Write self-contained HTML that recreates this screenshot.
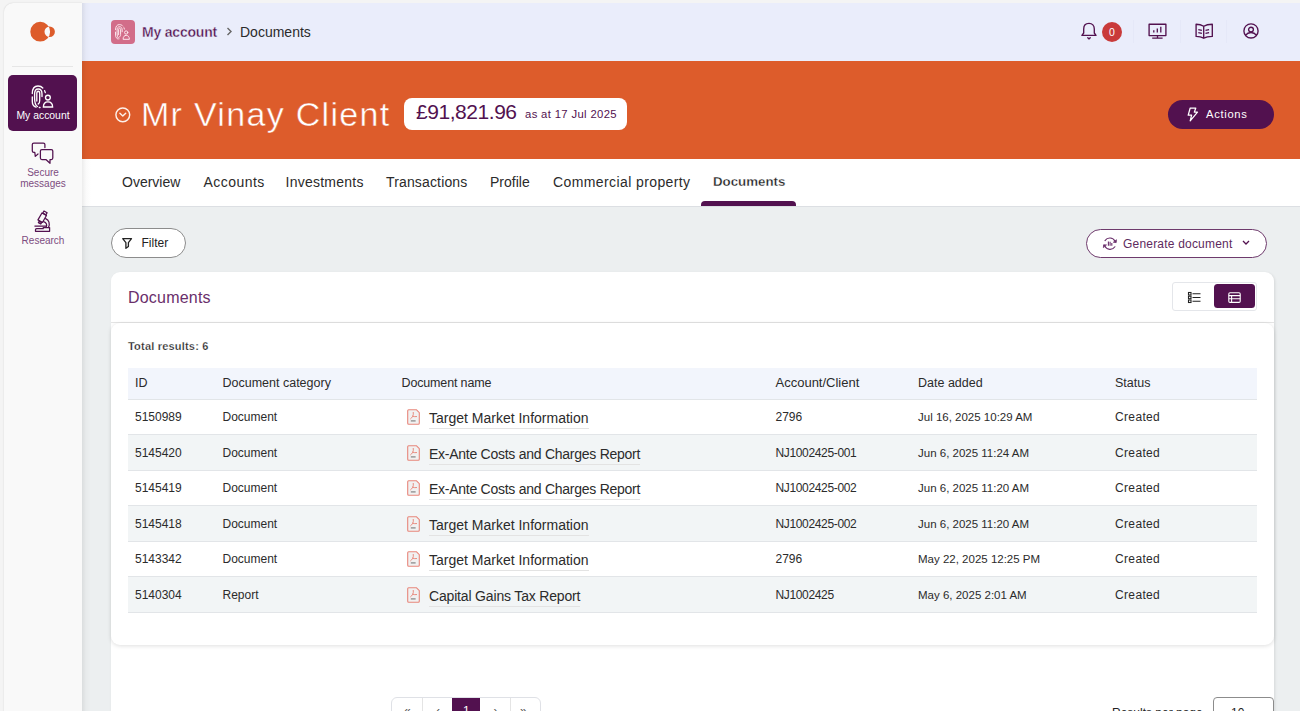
<!DOCTYPE html>
<html><head><meta charset="utf-8">
<style>
*{box-sizing:border-box;margin:0;padding:0}
html,body{width:1300px;height:711px;overflow:hidden;background:#f4f4f4;font-family:"Liberation Sans",sans-serif;color:#222;position:relative}
.a{position:absolute;white-space:nowrap}
svg{position:absolute;overflow:visible}
#sidebar{position:absolute;left:4px;top:3px;width:78px;height:730px;background:#f9f9f9;border-top-left-radius:9px;box-shadow:0 0 1.5px rgba(0,0,0,0.18)}
#main{position:absolute;left:82px;top:3px;width:1218px;height:730px;background:#eceff0}
#hdr{position:absolute;left:82px;top:3px;width:1218px;height:58px;background:#eaedfb}
#band{position:absolute;left:82px;top:61px;width:1218px;height:98px;background:#dd5c2b}
#tabs{position:absolute;left:82px;top:159px;width:1218px;height:48px;background:#fff;border-bottom:1px solid #dcdfe3}
#mainshadow{position:absolute;left:82px;top:3px;width:9px;height:730px;background:linear-gradient(to right,rgba(0,0,0,0.075),rgba(0,0,0,0.02) 45%,rgba(0,0,0,0))}
.tab{font-size:14px;color:#2b2b2b;top:174.4px;line-height:16px}
.slbl{position:absolute;font-size:10px;color:#7d4c80;text-align:center;width:78px;left:4px;line-height:11px}
.th{font-size:12.5px;color:#2b2b2b;top:376px;line-height:14px}
.td{font-size:12px;color:#2b2b2b;line-height:14px}
.lnk{font-size:14px;color:#2b2b2b;line-height:16px;border-bottom:1px solid #e3e3e3;padding-bottom:2px}
.row{position:absolute;left:128px;width:1129px;height:35.5px;border-bottom:1px solid #e2e5e8}
.pg{position:absolute;top:697px;width:30px;height:30px;border-right:1px solid #e0e0e0}
</style></head>
<body>
<div id="sidebar"></div>
<div id="main"></div>
<div id="hdr"></div>
<div id="band"></div>
<div id="tabs"></div>
<div id="mainshadow"></div>

<!-- sidebar -->
<svg style="left:0px;top:0px" width="60" height="50" viewBox="0 0 60 50">
  <path fill-rule="evenodd" fill="#dd5c2b" d="M50.1 31.7 A9.9 9.9 0 1 1 30.3 31.7 A9.9 9.9 0 1 1 50.1 31.7 Z M54.9 31.8 A5.2 5.2 0 1 1 44.5 31.8 A5.2 5.2 0 1 1 54.9 31.8 Z"/>
</svg>
<div class="a" style="left:12px;top:66px;width:61px;height:1px;background:#e6e6e6"></div>
<div class="a" style="left:8px;top:74.7px;width:69px;height:56.8px;background:#52114f;border-radius:5px"></div>
<svg style="left:25px;top:80px" width="35" height="32" viewBox="0 0 35 32" fill="none" stroke="#fff" stroke-width="1.35" stroke-linecap="round">
  <path d="M7.3 13.5 C7.3 8.5 9.5 6 13 6 C15.3 6 16.8 6.8 17.8 8"/>
  <path d="M7.3 17 V21.5 C7.3 24.5 8.8 26.5 11 27.2"/>
  <path d="M19.6 10.6 L20.3 12.6"/>
  <path d="M12.5 26.5 C10.3 25.5 9.6 23 9.6 18 V14 C9.6 10.8 11 9 13.2 9 C15.5 9 17 10.8 17 14 V16.5"/>
  <path d="M11.8 21 V13.5 C11.8 12 12.3 11.2 13.2 11.2 C14.2 11.2 14.7 12 14.7 13.5 V20.5 C14.7 22.5 14.2 23.6 13.2 24"/>
  <path d="M14.3 27.5 L15 27.5"/>
  <circle cx="22.9" cy="17.6" r="2.4"/>
  <path d="M18.4 27 C18.4 23.6 20.4 21.8 22.9 21.8 C25.4 21.8 27.6 23.6 27.6 27 Z"/>
</svg>
<div class="slbl" style="top:110px;color:#fff;font-size:10.4px">My account</div>

<svg style="left:28px;top:140px" width="30" height="28" viewBox="0 0 30 28" fill="none" stroke="#52114f" stroke-width="1.25" stroke-linejoin="round" stroke-linecap="round">
  <path d="M16.9 7.5 V4.6 Q16.9 3.1 15.4 3.1 H5.8 Q4.3 3.1 4.3 4.6 V11 Q4.3 12.4 5.8 12.4 H6.8 L7.3 16.4 L10 14"/>
  <path d="M13.9 9.6 H23.3 Q24.8 9.6 24.8 11.1 V18 Q24.8 19.5 23.3 19.5 H22 V23.3 L17.9 19.5 H13.9 Q12.4 19.5 12.4 18 V11.1 Q12.4 9.6 13.9 9.6 Z"/>
</svg>
<div class="slbl" style="top:167px">Secure</div>
<div class="slbl" style="top:178px">messages</div>

<svg style="left:28px;top:205px" width="28" height="31" viewBox="0 0 28 31" fill="none" stroke="#52114f" stroke-width="1.25" stroke-linejoin="round" stroke-linecap="round">
  <path d="M13.95 7.94 L18.45 10.54 L14.45 17.46 L9.95 14.86 Z"/>
  <path d="M15.99 6.0 L19.11 7.8 L17.91 9.88 L14.79 8.08 Z"/>
  <path d="M11.2 16.2 L13.6 17.6 L12.8 19 L10.4 17.6 Z"/>
  <path d="M17.6 13.6 C21 15 22.2 18.5 20.5 22.5"/>
  <path d="M15.6 16.6 C18.5 17.5 19.5 20 18 22"/>
  <path d="M6.9 21.1 H18.2"/>
  <path d="M7.5 26.3 H21.6 V22.6 H15.2 V23.7 H8.6 Q7.5 23.7 7.5 24.8 Z"/>
</svg>
<div class="slbl" style="top:235px">Research</div>

<!-- header -->
<div class="a" style="left:111px;top:20px;width:24px;height:24px;background:#d26d89;border-radius:4px"></div>
<svg style="left:115.3px;top:23.5px" width="15" height="16" viewBox="6.5 5.2 22 23.3" fill="none" stroke="#fde8ee" stroke-width="1.45" stroke-linecap="round">
  <path d="M7.3 13.5 C7.3 8.5 9.5 6 13 6 C15.3 6 16.8 6.8 17.8 8"/>
  <path d="M7.3 17 V21.5 C7.3 24.5 8.8 26.5 11 27.2"/>
  <path d="M19.6 10.6 L20.3 12.6"/>
  <path d="M12.5 26.5 C10.3 25.5 9.6 23 9.6 18 V14 C9.6 10.8 11 9 13.2 9 C15.5 9 17 10.8 17 14 V16.5"/>
  <path d="M11.8 21 V13.5 C11.8 12 12.3 11.2 13.2 11.2 C14.2 11.2 14.7 12 14.7 13.5 V20.5 C14.7 22.5 14.2 23.6 13.2 24"/>
  <circle cx="22.9" cy="17.6" r="2.4"/>
  <path d="M18.4 27 C18.4 23.6 20.4 21.8 22.9 21.8 C25.4 21.8 27.6 23.6 27.6 27 Z"/>
</svg>
<div class="a" style="left:142px;top:24px;font-size:14px;font-weight:bold;color:#52114f;line-height:16px;letter-spacing:-0.2px;-webkit-text-stroke:0.35px #eaedfb">My account</div>
<svg style="left:226px;top:27px" width="7" height="9" viewBox="0 0 7 9" fill="none" stroke="#666" stroke-width="1.4"><path d="M1.5 1 L5 4.5 L1.5 8"/></svg>
<div class="a" style="left:240px;top:24px;font-size:14px;color:#2b2b2b;line-height:16px">Documents</div>

<!-- header right icons -->
<svg style="left:1081px;top:22px" width="16" height="19" viewBox="0 0 16 19" fill="none" stroke="#52114f" stroke-width="1.35" stroke-linejoin="round" stroke-linecap="round">
  <path d="M0.9 13.4 H15 L13.3 11 V7 C13.3 3.5 11.3 1.4 8 1.4 C4.7 1.4 2.7 3.5 2.7 7 V11 Z"/>
  <path d="M6.8 15.7 L8 16.9 L9.2 15.7"/>
</svg>
<div class="a" style="left:1102px;top:21.5px;width:20px;height:20px;border-radius:50%;background:#c93a3a;color:#fff;font-size:10.5px;line-height:20px;text-align:center;transform:scaleX(1)">0</div>
<div class="a" style="left:1133px;top:20px;width:1px;height:23px;background:#e5e8f8"></div>
<svg style="left:1148px;top:23px" width="19" height="16" viewBox="0 0 19 16" fill="none" stroke="#52114f" stroke-width="1.35" stroke-linejoin="round">
  <rect x="1.1" y="1.2" width="16.8" height="11.4"/>
  <path d="M9.5 12.6 V15 M4.2 15.1 H14.6"/>
  <path d="M5.8 9.6 V7.2 M9.3 9.6 V5.6 M12.8 9.6 V3.7" stroke-width="1.3"/>
</svg>
<div class="a" style="left:1180px;top:20px;width:1px;height:23px;background:#e5e8f8"></div>
<svg style="left:1195px;top:23px" width="19" height="17" viewBox="0 0 19 17" fill="none" stroke="#52114f" stroke-width="1.35" stroke-linejoin="round">
  <path d="M1.1 1.2 C4 1.2 6.5 1.8 8.7 3.2 C10.9 1.8 13.4 1.2 17.3 1.2 V13.4 C13.7 13.4 10.9 13.9 8.7 15.2 C6.5 13.9 3.7 13.4 1.1 13.4 Z"/>
  <path d="M8.7 3.2 V15"/>
  <path d="M3.3 6.6 L6.9 7.3 M3.3 9.6 L6.9 10.3 M10.5 7.3 L14.1 6.6 M10.5 10.3 L14.1 9.6" stroke-width="1.3"/>
</svg>
<div class="a" style="left:1226px;top:20px;width:1px;height:23px;background:#e5e8f8"></div>
<svg style="left:1243px;top:23px" width="16" height="16" viewBox="0 0 16 16" fill="none" stroke="#52114f" stroke-width="1.35">
  <circle cx="8" cy="7.9" r="7.1"/>
  <circle cx="8" cy="6.6" r="2.4"/>
  <path d="M2.4 12.3 C3.9 10.4 5.8 9.5 8 9.5 C10.2 9.5 12.1 10.4 13.6 12.3"/>
</svg>

<!-- band -->
<svg style="left:114.5px;top:107px" width="16" height="16" viewBox="0 0 16 16" fill="none" stroke="#fdf0ea" stroke-width="1.45">
  <circle cx="7.8" cy="7.8" r="6.9"/>
  <path d="M4.9 6.2 L7.8 9 L10.7 6.2" stroke-linecap="round" stroke-linejoin="round"/>
</svg>
<div class="a" style="left:141px;top:94px;font-size:34px;color:#fff;line-height:40px;letter-spacing:1.3px;-webkit-text-stroke:0.45px #dd5c2b">Mr Vinay Client</div>
<div class="a" style="left:404px;top:98px;width:223px;height:32px;background:#fff;border-radius:8px"></div>
<div class="a" style="left:416px;top:101px;font-size:21px;color:#52114f;line-height:22px;letter-spacing:-0.45px">£91,821.96</div>
<div class="a" style="left:525px;top:107.5px;font-size:11.3px;color:#52114f;line-height:13px;letter-spacing:0.35px">as at 17 Jul 2025</div>
<div class="a" style="left:1168px;top:100px;width:106px;height:29px;background:#52114f;border-radius:15px"></div>
<svg style="left:1187px;top:107px" width="12" height="15" viewBox="0 0 12 15" fill="none" stroke="#fff" stroke-width="1.25" stroke-linejoin="round">
  <path d="M3.2 1 H8.8 L7.3 5.2 H10.5 L3.2 13.8 L4.6 8.2 H1.2 Z"/>
</svg>
<div class="a" style="left:1206px;top:106.5px;font-size:11.2px;color:#fff;line-height:14px;letter-spacing:0.7px">Actions</div>

<!-- tabs -->
<div class="a tab" style="left:122px">Overview</div>
<div class="a tab" style="left:203.5px;letter-spacing:0.45px">Accounts</div>
<div class="a tab" style="left:285.5px;letter-spacing:0.25px">Investments</div>
<div class="a tab" style="left:386px;letter-spacing:0.15px">Transactions</div>
<div class="a tab" style="left:490px">Profile</div>
<div class="a tab" style="left:553px;letter-spacing:0.4px">Commercial property</div>
<div class="a tab" style="left:713px;font-weight:bold;color:#1e1e1e;font-size:13.3px;-webkit-text-stroke:0.3px #fff">Documents</div>
<div class="a" style="left:701px;top:201px;width:95px;height:5px;background:#52114f;border-radius:4px 4px 0 0"></div>

<!-- filter / generate -->
<div class="a" style="left:111px;top:228px;width:75px;height:30px;background:#fff;border:1px solid #8c8c8c;border-radius:15px"></div>
<svg style="left:121.5px;top:237.5px" width="10" height="11" viewBox="0 0 10 11" fill="none" stroke="#222" stroke-width="1.3" stroke-linejoin="round">
  <path d="M0.7 0.7 H9.5 L6.4 4.6 V8.4 L3.9 10.3 V4.6 Z"/>
</svg>
<div class="a" style="left:141.5px;top:236px;font-size:12px;color:#222;line-height:14px">Filter</div>

<div class="a" style="left:1085.5px;top:228.5px;width:181px;height:29px;background:#fff;border:1px solid #6e3a6c;border-radius:15px"></div>
<svg style="left:1095px;top:230px" width="35" height="26" viewBox="0 0 35 26" fill="none" stroke="#6a2f6b" stroke-width="1.1" stroke-linecap="round">
  <path d="M10 10.6 A5.8 5.8 0 0 1 20 11.2"/>
  <path d="M18.7 12.3 L21.2 12.6 L21.4 10.1 Z" fill="#6a2f6b" stroke-width="0.8" stroke-linejoin="round"/>
  <path d="M19.9 16.8 A5.8 5.8 0 0 1 9.8 16"/>
  <path d="M11.1 14.9 L8.6 14.8 L8.4 17.3 Z" fill="#6a2f6b" stroke-width="0.8" stroke-linejoin="round"/>
  <path d="M13.4 11.4 V15.8 M15.1 11.8 V15.8 M16.8 13 V15.8" stroke-width="1.1" stroke-linecap="butt"/>
</svg>
<div class="a" style="left:1123px;top:237px;font-size:12px;color:#5e2a5e;line-height:14px;letter-spacing:0.2px">Generate document</div>
<svg style="left:1242px;top:240px" width="8" height="6" viewBox="0 0 8 6" fill="none" stroke="#52114f" stroke-width="1.3"><path d="M1 1 L4 4 L7 1"/></svg>

<!-- card -->
<div class="a" style="left:111px;top:272px;width:1163px;height:450px;background:#fff;border-radius:9px 9px 0 0;box-shadow:1px 1px 3px rgba(0,0,0,0.1)"></div>
<div class="a" style="left:128px;top:290px;font-size:16px;color:#6a2f6b;line-height:16px;letter-spacing:0.2px">Documents</div>
<div class="a" style="left:1171.5px;top:282px;width:85px;height:28.5px;border:1px solid #e4e6ea;border-radius:3px;background:#fff"></div>
<div class="a" style="left:1214px;top:284.3px;width:40.5px;height:23.8px;background:#52114f;border-radius:3.5px"></div>
<svg style="left:1188px;top:291.6px" width="13" height="11" viewBox="0 0 13 11" fill="none" stroke="#222" stroke-width="1.1">
  <rect x="0.5" y="0.5" width="2.5" height="2.5"/><rect x="0.5" y="4.2" width="2.5" height="2.5"/><rect x="0.5" y="8" width="2.5" height="2.5"/>
  <path d="M4.5 1.7 H12.5 M4.5 5.5 H12.5 M4.5 9.2 H12.5"/>
</svg>
<svg style="left:1228px;top:291.5px" width="13" height="11" viewBox="0 0 13 11" fill="none" stroke="#fff" stroke-width="1.1">
  <rect x="0.8" y="0.8" width="11.4" height="9.6" rx="1.2"/>
  <path d="M0.8 3.6 H12.2 M0.8 6.8 H12.2 M3.6 3.6 V10.4"/>
</svg>
<div class="a" style="left:111px;top:322px;width:1163px;height:1px;background:#e4e4e4"></div>
<!-- inner card body -->
<div class="a" style="left:111px;top:323px;width:1163px;height:322px;background:#fff;border-radius:9px;box-shadow:0 1px 4px rgba(0,0,0,0.13)"></div>
<div class="a" style="left:128px;top:339.5px;font-size:11px;font-weight:bold;color:#222;line-height:13px;letter-spacing:0.2px;-webkit-text-stroke:0.25px #fff">Total results: 6</div>

<!-- table -->
<div class="a" style="left:128px;top:368px;width:1129px;height:32px;background:#f2f5fc;border-bottom:1px solid #e2e5e8"></div>
<div class="a th" style="left:135px">ID</div>
<div class="a th" style="left:222.5px">Document category</div>
<div class="a th" style="left:401.5px;letter-spacing:-0.15px">Document name</div>
<div class="a th" style="left:775.5px;font-size:13px">Account/Client</div>
<div class="a th" style="left:918px">Date added</div>
<div class="a th" style="left:1115px">Status</div>

<div class="row" style="top:399.5px;background:#fff"></div>
<div class="row" style="top:435px;background:#f2f5f6"></div>
<div class="row" style="top:470.5px;background:#fff"></div>
<div class="row" style="top:506px;background:#f2f5f6"></div>
<div class="row" style="top:541.5px;background:#fff"></div>
<div class="row" style="top:577px;background:#f2f5f6"></div>

<div class="a td" style="left:135px;top:410.0px">5150989</div>
<div class="a td" style="left:222.5px;top:410.0px">Document</div>
<svg style="left:407px;top:409.0px" width="13" height="16" viewBox="0 0 13 16"><path d="M1.6 0.7 H9.3 L12.3 3.7 V14.3 Q12.3 15.3 11.3 15.3 H1.7 Q0.7 15.3 0.7 14.3 V1.7 Q0.7 0.7 1.6 0.7 Z" fill="#f1f1f1" stroke="#e8867b" stroke-width="1.1" stroke-linejoin="round"/><path d="M6.3 3.4 Q6.7 5.6 5.6 7.5 Q4.8 8.9 3.6 9.8 M5.8 7.3 Q7.6 7.9 9.6 7.6" fill="none" stroke="#e67a6c" stroke-width="0.85" stroke-linecap="round"/><path d="M3.8 11.9 H8.6" stroke="#8a8a8a" stroke-width="1.3"/></svg>
<div class="a lnk" style="left:429px;top:410.0px">Target Market Information</div>
<div class="a td" style="left:775.5px;top:410.0px">2796</div>
<div class="a td" style="left:918px;top:410.0px;font-size:11.5px">Jul 16, 2025 10:29 AM</div>
<div class="a td" style="left:1115px;top:410.0px;letter-spacing:0.35px">Created</div>
<div class="a td" style="left:135px;top:445.5px">5145420</div>
<div class="a td" style="left:222.5px;top:445.5px">Document</div>
<svg style="left:407px;top:444.5px" width="13" height="16" viewBox="0 0 13 16"><path d="M1.6 0.7 H9.3 L12.3 3.7 V14.3 Q12.3 15.3 11.3 15.3 H1.7 Q0.7 15.3 0.7 14.3 V1.7 Q0.7 0.7 1.6 0.7 Z" fill="#f1f1f1" stroke="#e8867b" stroke-width="1.1" stroke-linejoin="round"/><path d="M6.3 3.4 Q6.7 5.6 5.6 7.5 Q4.8 8.9 3.6 9.8 M5.8 7.3 Q7.6 7.9 9.6 7.6" fill="none" stroke="#e67a6c" stroke-width="0.85" stroke-linecap="round"/><path d="M3.8 11.9 H8.6" stroke="#8a8a8a" stroke-width="1.3"/></svg>
<div class="a lnk" style="left:429px;top:445.5px;letter-spacing:-0.26px">Ex-Ante Costs and Charges Report</div>
<div class="a td" style="left:775.5px;top:445.5px;letter-spacing:-0.35px">NJ1002425-001</div>
<div class="a td" style="left:918px;top:445.5px;font-size:11.5px">Jun 6, 2025 11:24 AM</div>
<div class="a td" style="left:1115px;top:445.5px;letter-spacing:0.35px">Created</div>
<div class="a td" style="left:135px;top:481.0px">5145419</div>
<div class="a td" style="left:222.5px;top:481.0px">Document</div>
<svg style="left:407px;top:480.0px" width="13" height="16" viewBox="0 0 13 16"><path d="M1.6 0.7 H9.3 L12.3 3.7 V14.3 Q12.3 15.3 11.3 15.3 H1.7 Q0.7 15.3 0.7 14.3 V1.7 Q0.7 0.7 1.6 0.7 Z" fill="#f1f1f1" stroke="#e8867b" stroke-width="1.1" stroke-linejoin="round"/><path d="M6.3 3.4 Q6.7 5.6 5.6 7.5 Q4.8 8.9 3.6 9.8 M5.8 7.3 Q7.6 7.9 9.6 7.6" fill="none" stroke="#e67a6c" stroke-width="0.85" stroke-linecap="round"/><path d="M3.8 11.9 H8.6" stroke="#8a8a8a" stroke-width="1.3"/></svg>
<div class="a lnk" style="left:429px;top:481.0px;letter-spacing:-0.26px">Ex-Ante Costs and Charges Report</div>
<div class="a td" style="left:775.5px;top:481.0px;letter-spacing:-0.35px">NJ1002425-002</div>
<div class="a td" style="left:918px;top:481.0px;font-size:11.5px">Jun 6, 2025 11:20 AM</div>
<div class="a td" style="left:1115px;top:481.0px;letter-spacing:0.35px">Created</div>
<div class="a td" style="left:135px;top:516.5px">5145418</div>
<div class="a td" style="left:222.5px;top:516.5px">Document</div>
<svg style="left:407px;top:515.5px" width="13" height="16" viewBox="0 0 13 16"><path d="M1.6 0.7 H9.3 L12.3 3.7 V14.3 Q12.3 15.3 11.3 15.3 H1.7 Q0.7 15.3 0.7 14.3 V1.7 Q0.7 0.7 1.6 0.7 Z" fill="#f1f1f1" stroke="#e8867b" stroke-width="1.1" stroke-linejoin="round"/><path d="M6.3 3.4 Q6.7 5.6 5.6 7.5 Q4.8 8.9 3.6 9.8 M5.8 7.3 Q7.6 7.9 9.6 7.6" fill="none" stroke="#e67a6c" stroke-width="0.85" stroke-linecap="round"/><path d="M3.8 11.9 H8.6" stroke="#8a8a8a" stroke-width="1.3"/></svg>
<div class="a lnk" style="left:429px;top:516.5px">Target Market Information</div>
<div class="a td" style="left:775.5px;top:516.5px;letter-spacing:-0.35px">NJ1002425-002</div>
<div class="a td" style="left:918px;top:516.5px;font-size:11.5px">Jun 6, 2025 11:20 AM</div>
<div class="a td" style="left:1115px;top:516.5px;letter-spacing:0.35px">Created</div>
<div class="a td" style="left:135px;top:552.0px">5143342</div>
<div class="a td" style="left:222.5px;top:552.0px">Document</div>
<svg style="left:407px;top:551.0px" width="13" height="16" viewBox="0 0 13 16"><path d="M1.6 0.7 H9.3 L12.3 3.7 V14.3 Q12.3 15.3 11.3 15.3 H1.7 Q0.7 15.3 0.7 14.3 V1.7 Q0.7 0.7 1.6 0.7 Z" fill="#f1f1f1" stroke="#e8867b" stroke-width="1.1" stroke-linejoin="round"/><path d="M6.3 3.4 Q6.7 5.6 5.6 7.5 Q4.8 8.9 3.6 9.8 M5.8 7.3 Q7.6 7.9 9.6 7.6" fill="none" stroke="#e67a6c" stroke-width="0.85" stroke-linecap="round"/><path d="M3.8 11.9 H8.6" stroke="#8a8a8a" stroke-width="1.3"/></svg>
<div class="a lnk" style="left:429px;top:552.0px">Target Market Information</div>
<div class="a td" style="left:775.5px;top:552.0px">2796</div>
<div class="a td" style="left:918px;top:552.0px;font-size:11.5px">May 22, 2025 12:25 PM</div>
<div class="a td" style="left:1115px;top:552.0px;letter-spacing:0.35px">Created</div>
<div class="a td" style="left:135px;top:587.5px">5140304</div>
<div class="a td" style="left:222.5px;top:587.5px">Report</div>
<svg style="left:407px;top:586.5px" width="13" height="16" viewBox="0 0 13 16"><path d="M1.6 0.7 H9.3 L12.3 3.7 V14.3 Q12.3 15.3 11.3 15.3 H1.7 Q0.7 15.3 0.7 14.3 V1.7 Q0.7 0.7 1.6 0.7 Z" fill="#f1f1f1" stroke="#e8867b" stroke-width="1.1" stroke-linejoin="round"/><path d="M6.3 3.4 Q6.7 5.6 5.6 7.5 Q4.8 8.9 3.6 9.8 M5.8 7.3 Q7.6 7.9 9.6 7.6" fill="none" stroke="#e67a6c" stroke-width="0.85" stroke-linecap="round"/><path d="M3.8 11.9 H8.6" stroke="#8a8a8a" stroke-width="1.3"/></svg>
<div class="a lnk" style="left:429px;top:587.5px;letter-spacing:-0.17px">Capital Gains Tax Report</div>
<div class="a td" style="left:775.5px;top:587.5px;letter-spacing:-0.35px">NJ1002425</div>
<div class="a td" style="left:918px;top:587.5px;font-size:11.5px">May 6, 2025 2:01 AM</div>
<div class="a td" style="left:1115px;top:587.5px;letter-spacing:0.35px">Created</div>

<!-- pagination -->
<div class="a" style="left:391px;top:697px;width:150px;height:40px;border:1px solid #dfe1e6;border-radius:6px;background:#fff"></div>
<div class="a" style="left:421.5px;top:698px;width:1px;height:30px;background:#e4e4e4"></div>
<div class="a" style="left:451.5px;top:698px;width:28.5px;height:30px;background:#52114f"></div>
<div class="a" style="left:509.5px;top:698px;width:1px;height:30px;background:#e4e4e4"></div>
<div class="a" style="left:404px;top:703.7px;font-size:12px;color:#555">«</div>
<div class="a" style="left:436px;top:703.7px;font-size:12px;color:#555">‹</div>
<div class="a" style="left:463px;top:703.7px;font-size:12px;color:#fff">1</div>
<div class="a" style="left:493.5px;top:703.7px;font-size:12px;color:#555">›</div>
<div class="a" style="left:520px;top:703.7px;font-size:12px;color:#555">»</div>

<div class="a" style="left:1112px;top:706px;font-size:12px;color:#222;line-height:14px">Results per page</div>
<div class="a" style="left:1213px;top:697px;width:60.5px;height:40px;border:1px solid #8c8c8c;border-radius:4px;background:#fff"></div>
<div class="a" style="left:1231px;top:706px;font-size:12px;color:#222;line-height:14px">10</div>
</body></html>
